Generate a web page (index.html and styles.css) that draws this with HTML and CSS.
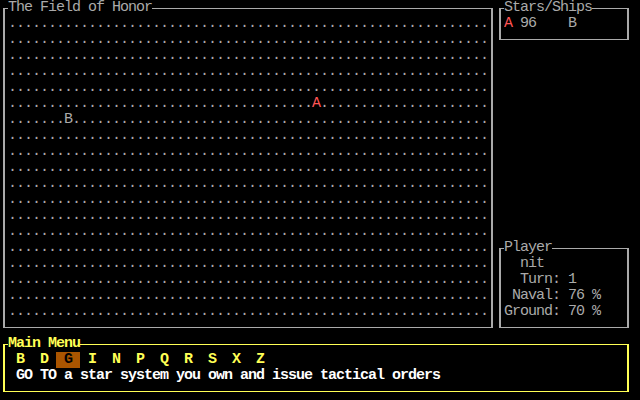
FILE: index.html
```html
<!DOCTYPE html>
<html>
<head>
<meta charset="utf-8">
<title>The Field of Honor</title>
<link rel="stylesheet" href="styles.css">
</head>
<body>
<div class="screen">
  <div class="top">
    <section class="box field">
      <div class="title">The Field of Honor</div>
      <div class="row">............................................................</div>
      <div class="row">............................................................</div>
      <div class="row">............................................................</div>
      <div class="row">............................................................</div>
      <div class="row">............................................................</div>
      <div class="row">......................................<span class="red">A</span>.....................</div>
      <div class="row">.......B....................................................</div>
      <div class="row">............................................................</div>
      <div class="row">............................................................</div>
      <div class="row">............................................................</div>
      <div class="row">............................................................</div>
      <div class="row">............................................................</div>
      <div class="row">............................................................</div>
      <div class="row">............................................................</div>
      <div class="row">............................................................</div>
      <div class="row">............................................................</div>
      <div class="row">............................................................</div>
      <div class="row">............................................................</div>
      <div class="row">............................................................</div>
    </section>
    <aside class="side">
      <section class="box small">
        <div class="title">Stars/Ships</div>
        <div class="row"><span class="red">A</span> 96    B</div>
      </section>
      <section class="box small">
        <div class="title">Player</div>
        <div class="row">  nit</div>
        <div class="row">  Turn: 1</div>
        <div class="row"> Naval: 76 %</div>
        <div class="row">Ground: 70 %</div>
      </section>
    </aside>
  </div>
  <section class="box menu">
    <div class="title">Main Menu</div>
    <div class="keys">
      <span class="key">B</span><span class="key">D</span><span class="key sel">G</span><span class="key">I</span><span class="key">N</span><span class="key">P</span><span class="key">Q</span><span class="key">R</span><span class="key">S</span><span class="key">X</span><span class="key">Z</span>
    </div>
    <div class="row desc"> GO TO a star system you own and issue tactical orders</div>
  </section>
</div>
</body>
</html>
```
FILE: styles.css
```css
html, body {
  margin: 0;
  padding: 0;
  background: #000;
}

.screen {
  width: 640px;
  height: 400px;
  overflow: hidden;
  background: #000;
  color: #aaaaaa;
  font-family: "Liberation Mono", monospace;
  font-size: 15px;
  line-height: 16px;
  letter-spacing: -1px;
}

.top {
  display: flex;
  height: 336px;
}

.box {
  box-sizing: border-box;
  border-style: solid;
  border-color: #aaaaaa;
  border-width: 1px 2px;
  padding: 0 0 7px 3px;
}

.title {
  width: max-content;
  margin-top: -9px;
  height: 16px;
  background: #000;
  white-space: pre;
}

.row {
  height: 16px;
  white-space: pre;
  overflow: hidden;
}

.field {
  width: 490px;
  margin: 8px 3px;
}

.side {
  width: 144px;
  display: flex;
  flex-direction: column;
  justify-content: space-between;
}

.small {
  margin: 8px 11px 8px 3px;
}

.red {
  color: #ff5555;
}

.menu {
  margin: 8px 11px 8px 3px;
  border-color: #ffff55;
}

.menu .title {
  color: #ffff55;
  font-weight: bold;
}

.keys {
  display: flex;
  height: 16px;
}

.key {
  width: 24px;
  text-align: center;
  color: #ffff55;
  font-weight: bold;
}

.key.sel {
  background: #aa5500;
  color: #000;
}

.desc {
  color: #ffffff;
  font-weight: bold;
}
```
